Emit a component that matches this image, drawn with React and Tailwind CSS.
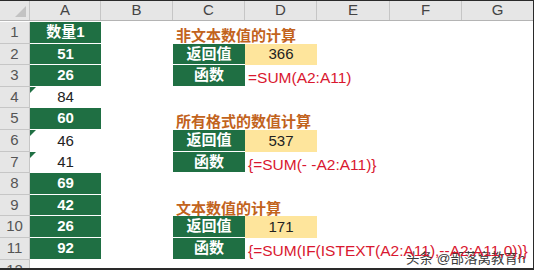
import React from 'react'

const GREEN = 'bg-[#1f6f43]'

const rows = [
  { a: '数量1', green: true, title: '非文本数值的计算' },
  { a: '51', green: true, label: '返回值', val: '366' },
  { a: '26', green: true, label: '函数', fx: '=SUM(A2:A11)' },
  { a: '84', tri: true },
  { a: '60', green: true, title: '所有格式的数值计算' },
  { a: '46', tri: true, label: '返回值', val: '537' },
  { a: '41', tri: true, label: '函数', fx: '{=SUM(- -A2:A11)}' },
  { a: '69', green: true },
  { a: '42', green: true, title: '文本数值的计算' },
  { a: '26', green: true, label: '返回值', val: '171' },
  { a: '92', green: true, label: '函数', fx: '{=SUM(IF(ISTEXT(A2:A11),--A2:A11,0))}' },
]

const cols = ['A', 'B', 'C', 'D', 'E', 'F', 'G']
const colW = ['w-[71px]', 'w-[72px]', 'w-[72px]', 'w-[72px]', 'w-[73px]', 'w-[72px]', 'w-[72px]']

const font = { fontFamily: '"Liberation Sans", "Noto Sans CJK SC", sans-serif' }

const RowHead = ({ n }) => (
  <div className="w-[30px] shrink-0 h-full bg-[#e6e6e6] border-r border-b border-[#c6c6c6] flex items-center justify-center text-[15px] text-[#555]">
    {n}
  </div>
)

const Row = ({ r, n }) => (
  <div className="flex h-[21.6px]">
    <RowHead n={n} />
    {/* A */}
    <div
      className={`relative w-[71px] shrink-0 h-full flex items-center justify-center text-[15px] ${
        r.green ? `${GREEN} text-white font-bold border-b border-white` : 'text-[#222]'
      }`}
    >
      {r.tri && (
        <span className="absolute left-0 top-0 w-0 h-0 border-t-[6px] border-r-[6px] border-t-[#1f6f43] border-r-transparent" />
      )}
      {r.a}
    </div>
    {/* B */}
    <div className="w-[72px] shrink-0 h-full" />
    {/* C */}
    <div
      className={`relative w-[72px] shrink-0 h-full flex items-center ${
        r.label ? `${GREEN} justify-center text-white font-bold text-[15px] border-b border-white` : ''
      }`}
    >
      {r.label}
      {r.title && (
        <span className="absolute left-[3px] top-[3px] whitespace-nowrap text-[15px] font-bold text-[#c2631d]">
          {r.title}
        </span>
      )}
    </div>
    {/* D */}
    <div
      className={`relative w-[72px] shrink-0 h-full flex items-center ${
        r.val ? 'bg-[#fee59c] justify-center text-[15px] text-[#222]' : ''
      }`}
    >
      {r.val}
      {r.fx && (
        <span className="absolute left-[3px] top-[1px] whitespace-nowrap text-[15.5px] text-[#d9172f] z-10">
          {r.fx}
        </span>
      )}
    </div>
    <div className="w-[73px] shrink-0 h-full" />
    <div className="w-[72px] shrink-0 h-full" />
    <div className="w-[72px] shrink-0 h-full" />
  </div>
)

export default function App() {
  return (
    <div className="relative w-[534px] h-[272px] bg-white overflow-hidden" style={font}>
      <div className="w-[534px] h-[270px] border-t border-r border-b-2 border-[#2a2a2a] overflow-hidden">
        {/* column headers */}
        <div className="flex h-[20px] bg-[#e6e6e6] border-b border-[#b4b4b4]">
          <div className="relative w-[30px] shrink-0 h-full border-r border-[#c6c6c6]">
            <span className="absolute right-[3px] bottom-[3px] w-0 h-0 border-b-[11px] border-l-[11px] border-b-[#c3c3c3] border-l-transparent" />
          </div>
          {cols.map((c, i) => (
            <div
              key={c}
              className={`${colW[i]} shrink-0 h-full border-r border-[#c6c6c6] flex items-center justify-center text-[15px] text-[#444]`}
            >
              {c}
            </div>
          ))}
        </div>
        <div className="h-px" />
        {rows.map((r, i) => (
          <Row key={i} r={r} n={i + 1} />
        ))}
        <div className="flex h-[21.6px]">
          <RowHead n={12} />
        </div>
      </div>
      {/* watermark */}
      <div
        className="absolute left-[406px] top-[249px] text-[13.5px] text-[#3a3a3a] whitespace-nowrap"
        style={{ textShadow: '0 0 2px #fff, 0 0 2px #fff' }}
      >
        头条 @部落窝教育h
      </div>
    </div>
  )
}
